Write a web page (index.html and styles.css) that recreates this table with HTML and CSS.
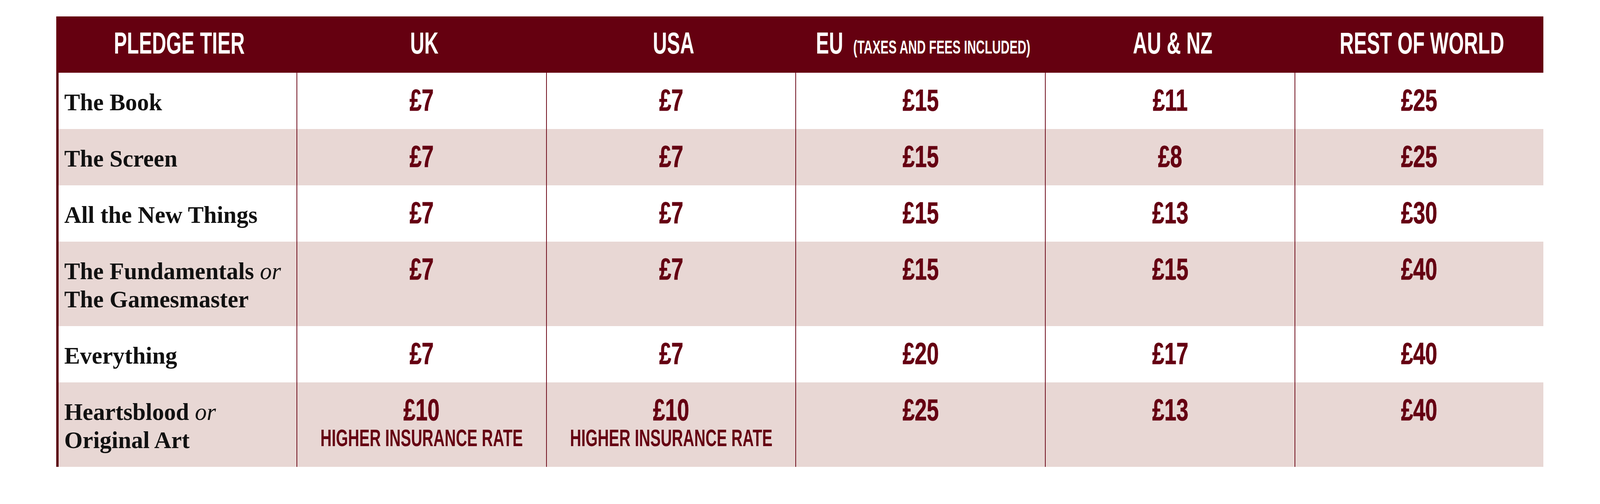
FILE: index.html
```html
<!DOCTYPE html>
<html lang="en">
<head>
<meta charset="utf-8">
<title>Pledge tiers – shipping</title>
<link rel="stylesheet" href="styles.css">
</head>
<body>
<div class="page">
  <div class="pricing">
    <div class="row head">
      <div class="hcell"><span class="cond">PLEDGE TIER</span></div>
      <div class="hcell"><span class="cond">UK</span></div>
      <div class="hcell"><span class="cond">USA</span></div>
      <div class="hcell"><span class="cond">EU<span class="small">(TAXES AND FEES INCLUDED)</span></span></div>
      <div class="hcell"><span class="cond">AU &amp; NZ</span></div>
      <div class="hcell"><span class="cond">REST OF WORLD</span></div>
    </div>

    <div class="row">
      <div class="tier">The Book</div>
      <div class="cell"><span class="price">£7</span></div>
      <div class="cell"><span class="price">£7</span></div>
      <div class="cell"><span class="price">£15</span></div>
      <div class="cell"><span class="price">£11</span></div>
      <div class="cell"><span class="price">£25</span></div>
    </div>

    <div class="row alt">
      <div class="tier">The Screen</div>
      <div class="cell"><span class="price">£7</span></div>
      <div class="cell"><span class="price">£7</span></div>
      <div class="cell"><span class="price">£15</span></div>
      <div class="cell"><span class="price">£8</span></div>
      <div class="cell"><span class="price">£25</span></div>
    </div>

    <div class="row">
      <div class="tier">All the New Things</div>
      <div class="cell"><span class="price">£7</span></div>
      <div class="cell"><span class="price">£7</span></div>
      <div class="cell"><span class="price">£15</span></div>
      <div class="cell"><span class="price">£13</span></div>
      <div class="cell"><span class="price">£30</span></div>
    </div>

    <div class="row alt tall">
      <div class="tier">The Fundamentals <i>or</i><br>The Gamesmaster</div>
      <div class="cell"><span class="price">£7</span></div>
      <div class="cell"><span class="price">£7</span></div>
      <div class="cell"><span class="price">£15</span></div>
      <div class="cell"><span class="price">£15</span></div>
      <div class="cell"><span class="price">£40</span></div>
    </div>

    <div class="row">
      <div class="tier">Everything</div>
      <div class="cell"><span class="price">£7</span></div>
      <div class="cell"><span class="price">£7</span></div>
      <div class="cell"><span class="price">£20</span></div>
      <div class="cell"><span class="price">£17</span></div>
      <div class="cell"><span class="price">£40</span></div>
    </div>

    <div class="row alt tall">
      <div class="tier">Heartsblood <i>or</i><br>Original Art</div>
      <div class="cell"><span class="price">£10</span><span class="note">HIGHER INSURANCE RATE</span></div>
      <div class="cell"><span class="price">£10</span><span class="note">HIGHER INSURANCE RATE</span></div>
      <div class="cell"><span class="price">£25</span></div>
      <div class="cell"><span class="price">£13</span></div>
      <div class="cell"><span class="price">£40</span></div>
    </div>
  </div>
</div>
</body>
</html>
```

FILE: styles.css
```css
html, body {
  margin: 0;
  padding: 0;
  background: #ffffff;
}

.page {
  padding: 42px 0 0 144px;
}

.pricing {
  width: 3807.2px;
}

.row {
  display: grid;
  grid-template-columns: 615.3px 638.4px 638.4px 639.3px 638.4px 637.4px;
  height: 144px;
  background: #ffffff;
}

.row.alt {
  background: #e8d7d4;
}

.row.tall {
  height: 216px;
}

.row.head {
  background: #650010;
}

.hcell {
  display: flex;
  align-items: center;
  justify-content: center;
  padding: 0 0 8px 15px;
  color: #ffffff;
  font-family: "Liberation Sans", Arial, sans-serif;
  font-weight: 700;
  font-size: 78px;
  line-height: 1;
  white-space: nowrap;
}

.cond {
  display: inline-block;
  transform: scaleX(0.644);
}

.small {
  font-size: 48px;
  margin-left: 40px;
}

.tier {
  border-left: 6.7px solid #5a000c;
  padding: 40px 0 0 14.5px;
  font-family: "Liberation Serif", "Times New Roman", serif;
  font-weight: 700;
  font-size: 60.5px;
  line-height: 72px;
  color: #111111;
}

.tier i {
  font-weight: 400;
}

.cell {
  border-left: 2.9px solid #6f0d1c;
  padding-top: 33.6px;
  display: flex;
  flex-direction: column;
  align-items: center;
  color: #650012;
  font-family: "Liberation Sans", Arial, sans-serif;
  font-weight: 700;
  white-space: nowrap;
}

.price {
  display: block;
  font-size: 78px;
  line-height: 72px;
  transform: scaleX(0.71);
  -webkit-text-stroke: 1px #650012;
}

.note {
  display: block;
  font-size: 60.5px;
  line-height: 72px;
  transform: scaleX(0.657);
}
```
